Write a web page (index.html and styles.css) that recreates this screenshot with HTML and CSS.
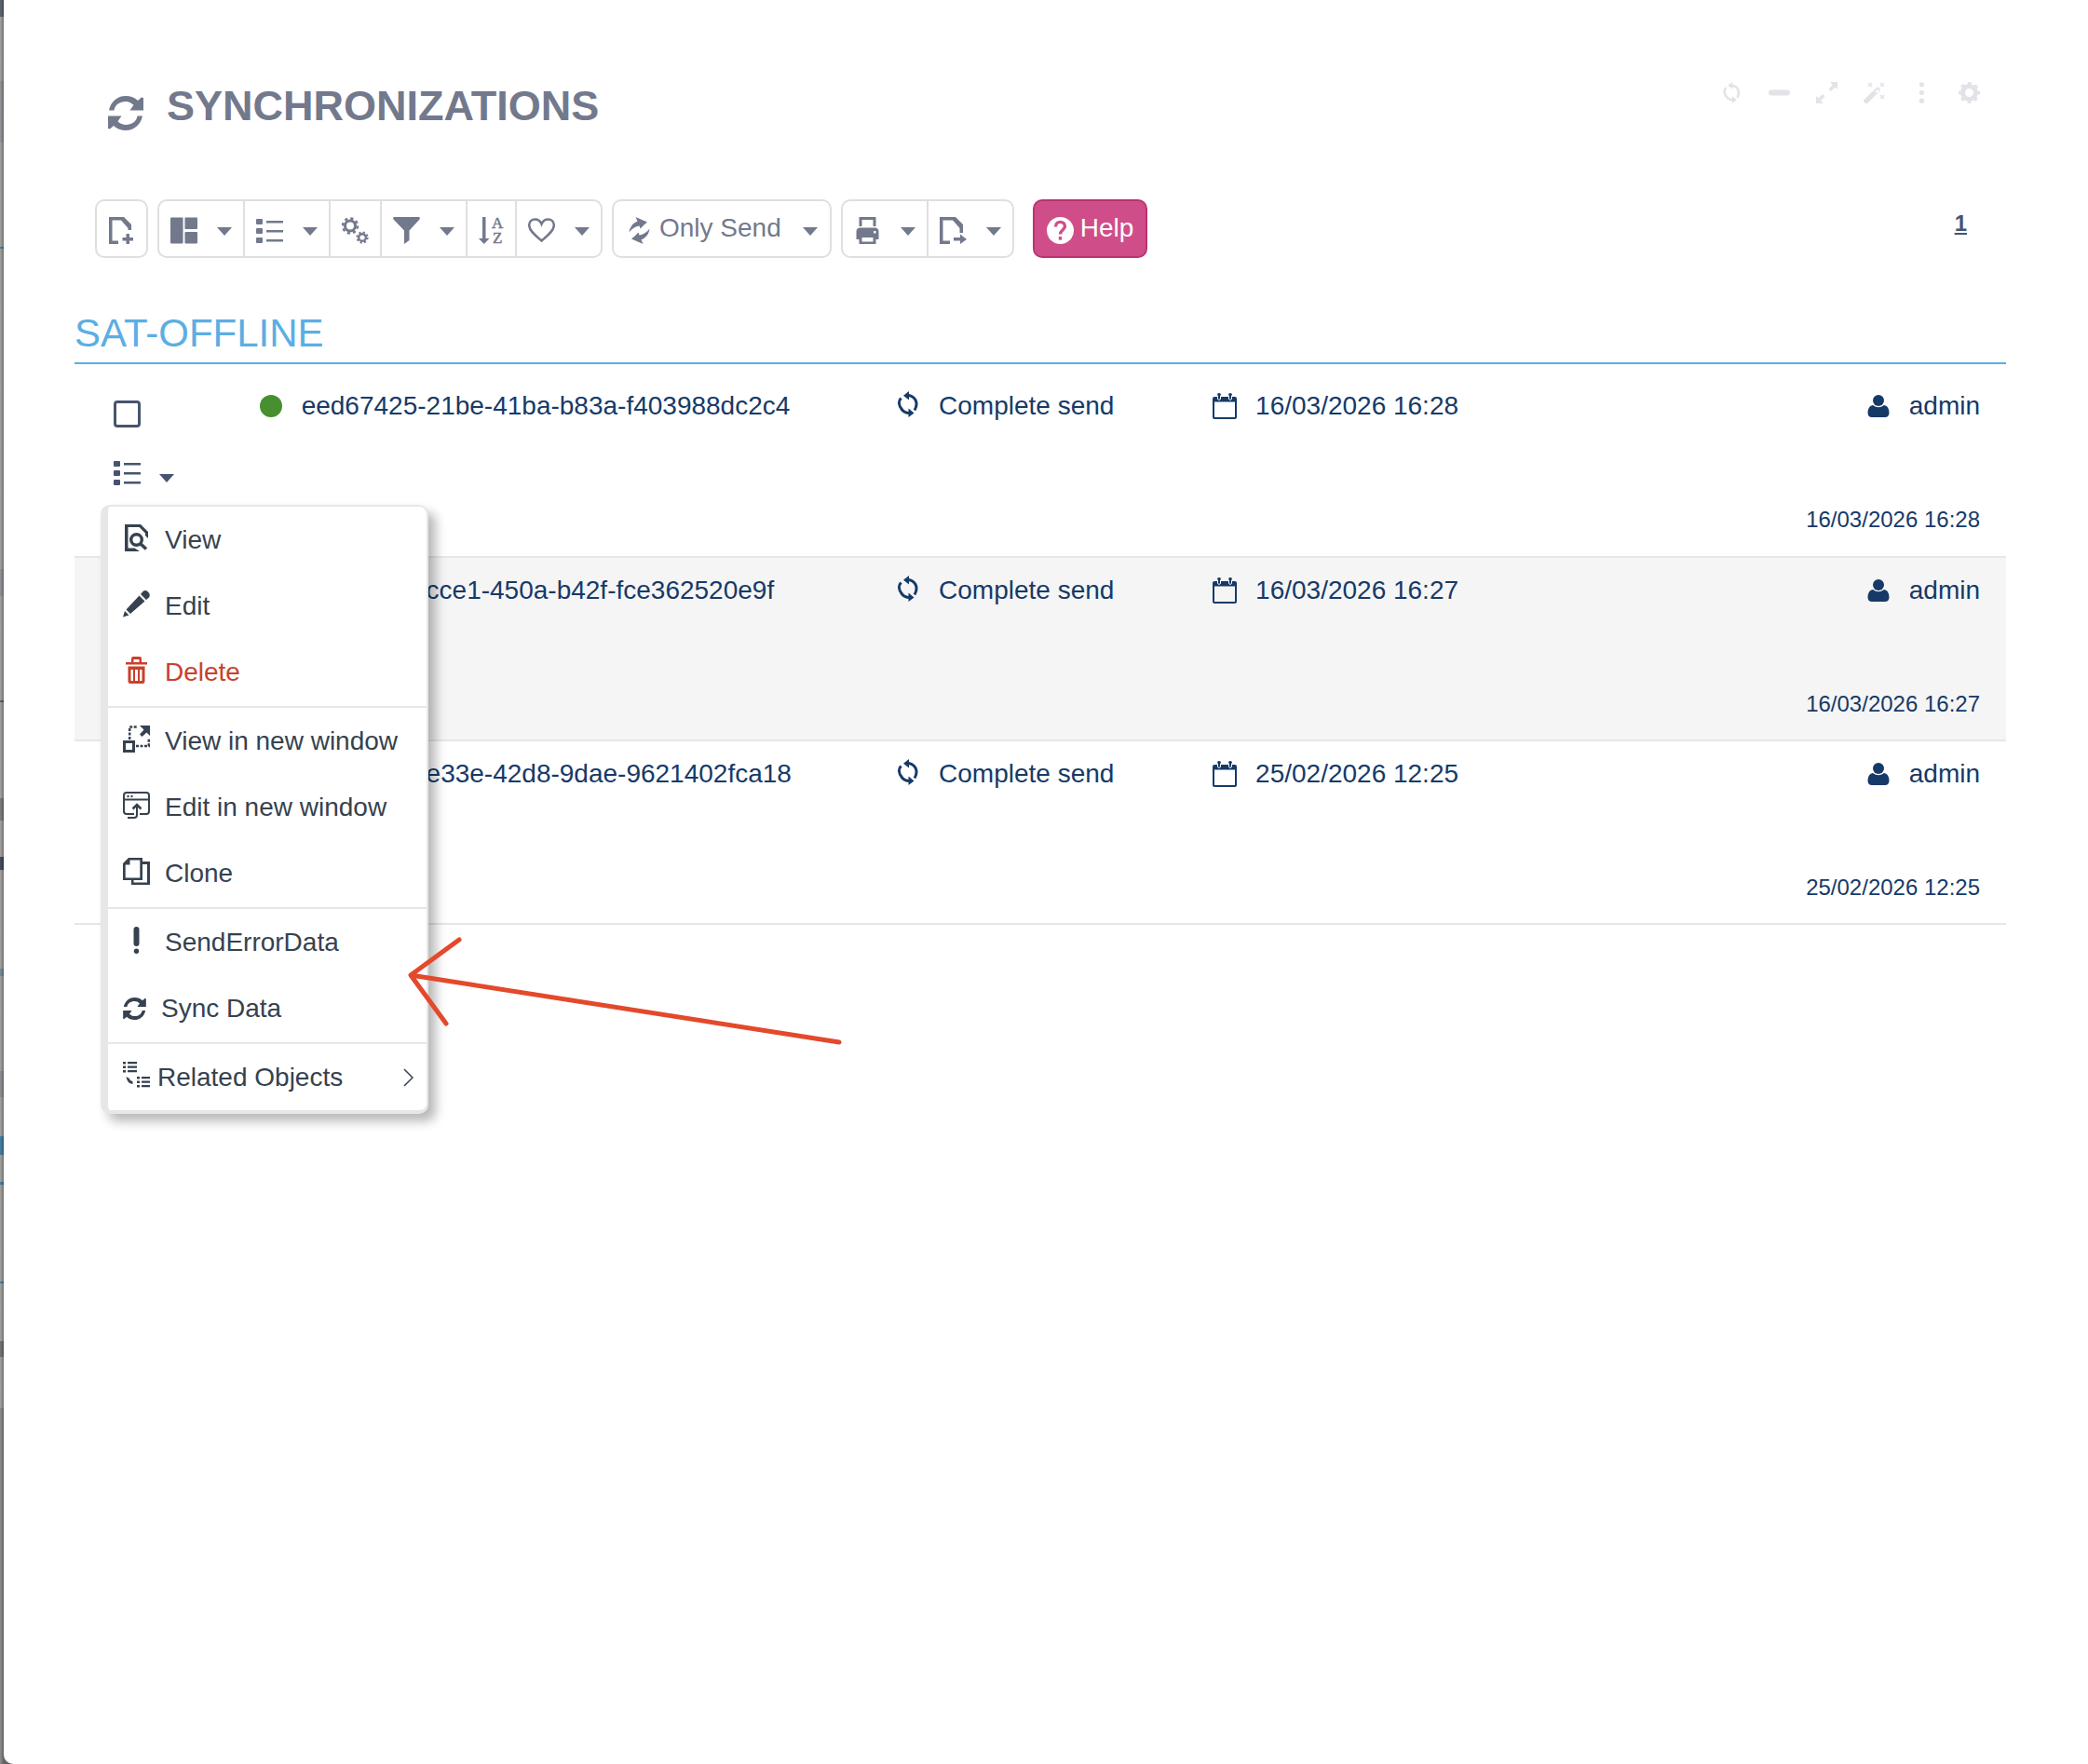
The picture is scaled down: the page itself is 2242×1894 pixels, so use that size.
FILE: index.html
```html
<!DOCTYPE html>
<html lang="en">
<head>
    <meta charset="UTF-8">
    <meta name="viewport" content="width=device-width, initial-scale=1.0">
    <title>Synchronizations</title>
    <link rel="stylesheet" href="styles.css">
</head>
<body>

    <!-- Icons -->
    <svg class="sprite" aria-hidden="true">
        <symbol id="i-refresh" viewBox="0 0 38 37">
            <path d="M1 15.500C3 6 10 0 19 0C24 0 28.500 1.800 32 5L36 1.500L38 2V15.500H23.500L27.500 9.800C25 7.300 22 6 19 6C12.500 6 7.500 9.500 6.500 15.500z"/>
            <path d="M37 21.500C35 31 28 37 19 37C14 37 9.500 35.200 6 32L2 35.500L0 35V21.500H14.500L10.500 27.200C13 29.700 16 31 19 31C25.500 31 30.500 27.500 31.500 21.500z"/>
        </symbol>
        <symbol id="i-caret" viewBox="0 0 16 9"><path d="M0 0H16L8 9z"/></symbol>
        <symbol id="i-new" viewBox="0 0 29 29">
            <path d="M11 29H1V0H17L25 8V14H21.500V12L14 3.500H4.500V25.500H11z"/>
            <path d="M19.500 18h3.500v4h4v3.500h-4v4h-3.500v-4h-4v-3.500h4z"/>
        </symbol>
        <symbol id="i-layout" viewBox="0 0 30 29">
            <rect width="14" height="29" rx="1"/><rect x="16" width="14" height="13" rx="1"/><rect x="16" y="16" width="14" height="13" rx="1"/>
        </symbol>
        <symbol id="i-list" viewBox="0 0 29 29">
            <rect y="2" width="7" height="6" rx="1"/><rect y="12" width="7" height="6" rx="1"/><rect y="22" width="7" height="6" rx="1"/>
            <path d="M11 4h18v2.500H11zM11 14h18v2.500H11zM11 24h18v2.500H11z"/>
        </symbol>
        <symbol id="i-gears" viewBox="0 0 29 29">
            <g fill="none" stroke="currentColor">
                <circle cx="9" cy="9.500" r="5.500" stroke-width="3"/>
                <circle cx="9" cy="9.500" r="8" stroke-width="2.500" stroke-dasharray="3.200 3.080"/>
                <circle cx="22" cy="22" r="3.800" stroke-width="2.400"/>
                <circle cx="22" cy="22" r="5.600" stroke-width="2" stroke-dasharray="2.200 2.200"/>
            </g>
        </symbol>
        <symbol id="i-filter" viewBox="0 0 29 29"><path d="M1 0H28Q29.500 .5 28.500 2.500L17.500 14.500V25L12 29V14.500L.5 2.500Q-.5 .5 1 0z"/></symbol>
        <symbol id="i-heart" viewBox="0 0 29 29">
            <path fill="none" stroke="currentColor" stroke-width="2.500" d="M14.500 25.500C8 20 1.200 14.500 1.200 9C1.200 5 4 2.500 7.500 2.500C10.500 2.500 13 4 14.500 7.500C16 4 18.500 2.500 21.500 2.500C25 2.500 27.800 5 27.800 9C27.800 14.500 21 20 14.500 25.500z"/>
        </symbol>
        <symbol id="i-send" viewBox="0 0 23 29">
            <path id="bolt" d="M7.500 0L20 5.500L16.500 8.500L12.500 12.500L11.500 9.500Q5 10.500 .5 16.500Q1.500 8 9.500 4.500z"/>
            <use href="#bolt" transform="rotate(180 11.500 14.500)"/>
        </symbol>
        <symbol id="i-print" viewBox="0 0 24 29">
            <path d="M3 0h18v10h-3V3H6v7H3z"/>
            <path fill-rule="evenodd" d="M3 11.500h18q3 1 3 4V24h-3v5H3v-5H0v-8.500q0-3 3-4zM6 22v4.500h12V22zM18.500 15v2.500h2.500V15z"/>
        </symbol>
        <symbol id="i-export" viewBox="0 0 29 29">
            <path d="M11 29H0V0H17L25 8V17H21.500V12L14 3.500H3.500V25.500H11z"/>
            <path d="M15 22h7v-3.500l7 5.500l-7 5v-3.500h-7z"/>
        </symbol>
        <symbol id="i-help" viewBox="0 0 29 29">
            <circle cx="14.500" cy="14.500" r="14.500"/>
            <path fill="none" stroke="#cf4e8a" stroke-width="3.400" d="M9.500 10.500C9.500 3.500 19.500 4 19.500 10C19.500 13.500 14.500 14 14.500 18.500"/>
            <rect x="12.800" y="21" width="3.400" height="3.600" fill="#cf4e8a"/>
        </symbol>
        <symbol id="i-loop" viewBox="0 0 22 28">
            <path fill="none" stroke="currentColor" stroke-width="3" d="M4.500 19.500C.5 15 .8 10.500 3.500 7.500M10 4.500C18 4.500 23 12 18 20.500M3.500 18.500C5.500 22 9 23.500 13 23.500"/>
            <path d="M12 0V9.500L6 4.700zM11.500 18.500V28L17.500 23.500z"/>
        </symbol>
        <symbol id="i-minus" viewBox="0 0 23 23"><rect y="8.500" width="23" height="6" rx="3"/></symbol>
        <symbol id="i-expand" viewBox="0 0 23 23">
            <path d="M15 0h8v8l-2.500-2.500L16 10l-2.500-2.500L18 3zM0 23v-8l2.500 2.500L7 13l2.500 2.500L5 20l3 3z"/>
        </symbol>
        <symbol id="i-wand" viewBox="0 0 23 23">
            <path fill-rule="evenodd" d="M0 19.500L14 6q1.500-1 3 .5t.5 3L4 23q-1.500 .5-3-1t-1-2.500zM12.500 10l2 2l2-2.500l-1.500-1.500z"/>
            <path fill="none" stroke="currentColor" stroke-width="1.500" d="M5 1l4 4m0-4l-4 4M18 1l4 4m0-4l-4 4M18 14l4 4m0-4l-4 4"/>
        </symbol>
        <symbol id="i-dots" viewBox="0 0 23 23"><circle cx="11.500" cy="2.800" r="2.600"/><circle cx="11.500" cy="11.500" r="2.600"/><circle cx="11.500" cy="20.200" r="2.600"/></symbol>
        <symbol id="i-gear" viewBox="0 0 23 23">
            <g fill="none" stroke="currentColor">
                <circle cx="11.500" cy="11.500" r="7" stroke-width="5"/>
                <circle cx="11.500" cy="11.500" r="10" stroke-width="3" stroke-dasharray="3.800 4.054" stroke-dashoffset="1.900"/>
            </g>
        </symbol>
        <symbol id="i-calendar" viewBox="0 0 26 28">
            <path fill-rule="evenodd" d="M2 4h3V2q0-2 2-2t2 2v2h8V2q0-2 2-2t2 2v2h3q2 0 2 2v20q0 2-2 2H2q-2 0-2-2V6q0-2 2-2zM2 9.500V26h22V9.500z"/>
            <path fill="none" stroke="#fff" d="M5.500 2.500v4q1.500 2 3 0v-4M17.500 2.500v4q1.500 2 3 0v-4"/>
        </symbol>
        <symbol id="i-user" viewBox="0 0 24 24">
            <circle cx="12" cy="6" r="6"/>
            <path d="M6 11q6 4.500 12 0q5 .5 5.500 8q0 5-4.500 5H5q-4.500 0-4.500-5q.5-7.500 5.500-8z"/>
        </symbol>
        <symbol id="i-view" viewBox="0 0 29 29">
            <path d="M2 0h17l8 8v7l-3-3V9.500L17.500 3H5.500v22.500h7L18 29H2z"/>
            <path fill="none" stroke="currentColor" stroke-width="3.500" d="M18 20l7 6.500"/>
            <circle cx="14.500" cy="16.500" r="5.800" fill="none" stroke="currentColor" stroke-width="3.400"/>
        </symbol>
        <symbol id="i-edit" viewBox="0 0 29 29">
            <path d="M0 28.500L2 22L6.500 26.500zM3.500 20.500L17.500 5.500L23.500 11.500L8 25zM19 4L21.500 1Q24-1 27 1.500Q30 4.500 28 7.500L25 10z"/>
        </symbol>
        <symbol id="i-delete" viewBox="0 0 29 29">
            <path fill-rule="evenodd" d="M9 6V2q0-2 2-2h7q2 0 2 2v4h6v2.500H3V6zM11.500 6h6V3h-6zM5.500 10.500h18V26q0 3-2.500 3H8q-2.500 0-2.500-3zM8.500 14v12h2.500V14zM13 14v12h3V14zM18 14v12h2.500V14z"/>
        </symbol>
        <symbol id="i-viewnew" viewBox="0 0 29 29">
            <path fill-rule="evenodd" d="M0 16h13v13H0zM3 19v7h7v-7z"/>
            <path d="M18 0h11v11l-3.500-3.500l-5 4.500l-2.500-2.500l4.500-5z"/>
            <path fill="none" stroke="currentColor" stroke-width="2.500" stroke-dasharray="3 1.500" d="M7.200 15V1.500H15M14 22H27.800V14"/>
        </symbol>
        <symbol id="i-editnew" viewBox="0 0 29 29">
            <g fill="none" stroke="currentColor" stroke-width="2">
                <path d="M12 24H4q-3 0-3-3V4q0-3 3-3h21q3 0 3 3v17q0 3-3 3h-7M1 8.500h27M5 28h7q3 0 3-3V15"/>
                <path d="M10.500 18.500L15 14l4.500 4.500" stroke-width="2.500"/>
            </g>
            <circle cx="5.500" cy="5" r="1.200"/><circle cx="9.500" cy="5" r="1.200"/>
        </symbol>
        <symbol id="i-clone" viewBox="0 0 29 29">
            <path fill-rule="evenodd" d="M6 0h15v24H0V6zM7.500 2.500v5H2.700v14h15.600v-19z"/>
            <path d="M21 4h8v25H9v-5h2.500v2.500h14.500V7H21z"/>
        </symbol>
        <symbol id="i-bang" viewBox="0 0 29 29"><rect x="11.500" width="6" height="21" rx="3"/><circle cx="14.500" cy="26.300" r="2.700"/></symbol>
        <symbol id="i-related" viewBox="0 0 29 29">
            <path d="M0 0h3v2.500H0zM5 0h10v2.200H5zM0 4.500h3V7H0zM5 4.500h10v2.200H5zM0 9h3v2.500H0zM5 9h10v2.200H5z"/>
            <path d="M15 16h3v2.500h-3zM20 16h9v2.200h-9zM15 20.500h3V23h-3zM20 20.500h9v2.200h-9zM15 25h3v2.500h-3zM20 25h9v2.200h-9z"/>
            <path d="M3.500 16L7 18q0 2 3.500 3V24Q4.500 23.500 3.500 16z"/>
        </symbol>
        <symbol id="i-chevron" viewBox="0 0 11 20"><path fill="none" stroke="currentColor" stroke-width="1.500" d="M1 1l9 9l-9 9"/></symbol>
    </svg>

    <main class="panel">
        <header class="panel-header">
            <svg class="title-icon"><use href="#i-refresh"/></svg>
            <h1>SYNCHRONIZATIONS</h1>
            <div class="window-tools">
                <button aria-label="Reload"><svg><use href="#i-loop"/></svg></button>
                <button aria-label="Minimize"><svg><use href="#i-minus"/></svg></button>
                <button aria-label="Expand"><svg><use href="#i-expand"/></svg></button>
                <button aria-label="Wizard"><svg><use href="#i-wand"/></svg></button>
                <button aria-label="More"><svg><use href="#i-dots"/></svg></button>
                <button aria-label="Settings"><svg><use href="#i-gear"/></svg></button>
            </div>
        </header>

        <div class="toolbar">
            <div class="btn-group">
                <button class="btn" aria-label="New"><svg class="icon"><use href="#i-new"/></svg></button>
            </div>
            <div class="btn-group">
                <button class="btn" aria-label="Layout"><svg class="icon"><use href="#i-layout"/></svg><svg class="caret"><use href="#i-caret"/></svg></button>
                <button class="btn" aria-label="Actions"><svg class="icon"><use href="#i-list"/></svg><svg class="caret"><use href="#i-caret"/></svg></button>
                <button class="btn" aria-label="Processes"><svg class="icon"><use href="#i-gears"/></svg></button>
                <button class="btn" aria-label="Filter"><svg class="icon"><use href="#i-filter"/></svg><svg class="caret"><use href="#i-caret"/></svg></button>
                <button class="btn" aria-label="Sort"><svg class="icon icon-narrow" viewBox="0 0 27 29"><path d="M4 0h3.500v23h4L5.800 29L0 23h4z"/><text x="14" y="12" class="sort-letter">A</text><text x="15" y="28" class="sort-letter">Z</text></svg></button>
                <button class="btn" aria-label="Favourites"><svg class="icon"><use href="#i-heart"/></svg><svg class="caret"><use href="#i-caret"/></svg></button>
            </div>
            <div class="btn-group">
                <button class="btn btn-send"><svg class="icon icon-send"><use href="#i-send"/></svg><span>Only Send</span><svg class="caret"><use href="#i-caret"/></svg></button>
            </div>
            <div class="btn-group">
                <button class="btn" aria-label="Print"><svg class="icon"><use href="#i-print"/></svg><svg class="caret"><use href="#i-caret"/></svg></button>
                <button class="btn" aria-label="Export"><svg class="icon"><use href="#i-export"/></svg><svg class="caret"><use href="#i-caret"/></svg></button>
            </div>
            <button class="btn btn-help"><svg class="icon"><use href="#i-help"/></svg><span>Help</span></button>
            <a class="page-link" href="#">1</a>
        </div>

        <section class="group">
            <h2>SAT-OFFLINE</h2>
            <table class="rows">
                <colgroup><col class="col-check"><col class="col-id"><col class="col-type"><col class="col-date"><col></colgroup>
                <tr>
                    <td>
                        <input type="checkbox" class="check" aria-label="Select row">
                        <div class="row-actions">
                            <button class="row-btn" aria-label="Row actions"><svg class="icon"><use href="#i-list"/></svg><svg class="caret"><use href="#i-caret"/></svg></button>
                            <!-- Row menu -->
                            <div class="menu">
                                <a href="#"><svg class="icon"><use href="#i-view"/></svg>View</a>
                                <a href="#"><svg class="icon"><use href="#i-edit"/></svg>Edit</a>
                                <a href="#" class="danger"><svg class="icon"><use href="#i-delete"/></svg>Delete</a>
                                <hr>
                                <a href="#"><svg class="icon"><use href="#i-viewnew"/></svg>View in new window</a>
                                <a href="#"><svg class="icon"><use href="#i-editnew"/></svg>Edit in new window</a>
                                <a href="#"><svg class="icon"><use href="#i-clone"/></svg>Clone</a>
                                <hr>
                                <a href="#"><svg class="icon"><use href="#i-bang"/></svg>SendErrorData</a>
                                <a href="#"><svg class="icon icon-small"><use href="#i-refresh"/></svg>Sync Data</a>
                                <hr>
                                <a href="#" class="submenu"><svg class="icon"><use href="#i-related"/></svg>Related Objects<svg class="chevron"><use href="#i-chevron"/></svg></a>
                            </div>
                        </div>
                    </td>
                    <td><div class="field"><span class="slot"><i class="dot"></i></span>eed67425-21be-41ba-b83a-f403988dc2c4</div></td>
                    <td><div class="field"><span class="slot"><svg class="loop"><use href="#i-loop"/></svg></span>Complete send</div></td>
                    <td><div class="field"><span class="slot"><svg class="calendar"><use href="#i-calendar"/></svg></span>16/03/2026 16:28</div></td>
                    <td class="last"><div class="field"><span class="slot"><svg class="user"><use href="#i-user"/></svg></span>admin</div><div class="stamp">16/03/2026 16:28</div></td>
                </tr>
                <tr>
                    <td><input type="checkbox" class="check" aria-label="Select row"></td>
                    <td><div class="field"><span class="slot"><i class="dot"></i></span>3d9b7a52-cce1-450a-b42f-fce362520e9f</div></td>
                    <td><div class="field"><span class="slot"><svg class="loop"><use href="#i-loop"/></svg></span>Complete send</div></td>
                    <td><div class="field"><span class="slot"><svg class="calendar"><use href="#i-calendar"/></svg></span>16/03/2026 16:27</div></td>
                    <td class="last"><div class="field"><span class="slot"><svg class="user"><use href="#i-user"/></svg></span>admin</div><div class="stamp">16/03/2026 16:27</div></td>
                </tr>
                <tr>
                    <td><input type="checkbox" class="check" aria-label="Select row"></td>
                    <td><div class="field"><span class="slot"><i class="dot"></i></span>7b04a9d1-e33e-42d8-9dae-9621402fca18</div></td>
                    <td><div class="field"><span class="slot"><svg class="loop"><use href="#i-loop"/></svg></span>Complete send</div></td>
                    <td><div class="field"><span class="slot"><svg class="calendar"><use href="#i-calendar"/></svg></span>25/02/2026 12:25</div></td>
                    <td class="last"><div class="field"><span class="slot"><svg class="user"><use href="#i-user"/></svg></span>admin</div><div class="stamp">25/02/2026 12:25</div></td>
                </tr>
            </table>
        </section>

        <svg class="arrow" viewBox="0 0 468 118" aria-hidden="true"><path d="M464 114L4 42L56 4M4 42L42 94"/></svg>
    </main>

</body>
</html>
```
FILE: styles.css
```css
* {
    box-sizing: border-box;
}
html {
    background: #939391;
}
body {
    margin: 0;
    font-family: "Liberation Sans", Arial, sans-serif;
    font-size: 28px;
    line-height: 34px;
    color: #163a68;
    /* page behind the panel, only its edge shows */
    background:
        linear-gradient(to right, rgba(0,0,0,0) 0, rgba(0,0,0,0.3) 4px),
        linear-gradient(#5f6872 0 18px, #a5a4a1 18px 87px, #96979b 87px 153px, #a5a4a1 153px 265px, #4583a8 265px 267px,
            #a5a4a1 267px 611px, #94959a 611px 640px, #a5a4a1 640px 752px, #5b6470 752px 754px, #a5a4a1 754px 857px,
            #808080 857px 881px, #a5a4a1 881px 920px, #454f60 920px 934px, #a5a4a1 934px 1040px, #7b8f99 1040px 1048px,
            #a5a4a1 1048px 1150px, #909196 1150px 1178px, #a5a4a1 1178px 1220px, #4583a8 1220px 1240px, #a5a4a1 1240px 1269px,
            #4583a8 1269px 1272px, #a5a4a1 1272px 1376px, #4583a8 1376px 1378px, #a5a4a1 1378px 1440px, #777675 1440px 1457px,
            #a5a4a1 1457px 1512px, #8e8e8e 1512px);
}
button {
    font: inherit;
    color: inherit;
    background: none;
    border: none;
    padding: 0;
    cursor: pointer;
}
svg {
    display: block;
    fill: currentColor;
    flex: none;
}
.sprite { position: absolute; width: 0; height: 0; }
.sort-letter { font: 17px "Liberation Serif", serif; stroke: currentColor; stroke-width: 0.5; }

.panel {
    position: relative;
    min-height: 100vh;
    margin-left: 4px;
    padding: 88px 88px 0 76px;
    background: #fff;
    border-bottom-left-radius: 10px;
}
.panel-header {
    display: flex;
    align-items: flex-start;
    padding: 0 28px 0 36px;
    color: #73798d;
}
.title-icon { width: 38px; height: 37px; margin-top: 15px; }
h1 {
    margin: 0 0 0 25px;
    font-size: 45px;
    line-height: 52px;
}
.window-tools {
    display: flex;
    gap: 28px;
    margin-left: auto;
    color: #e1e3e8;
}
.window-tools svg { width: 23px; height: 23px; }

.toolbar {
    display: flex;
    align-items: center;
    gap: 10px;
    margin-top: 74px;
    padding: 0 42px 0 22px;
    color: #73798d;
}
.btn-group { display: flex; }
.btn {
    display: flex;
    align-items: center;
    gap: 21px;
    height: 63px;
    padding: 3px 12px 0;
    border: 2px solid #dfdfdf;
}
.btn + .btn { margin-left: -2px; }
.btn:first-child { border-radius: 10px 0 0 10px; }
.btn:last-child { border-radius: 0 10px 10px 0; }
.btn:only-child, .btn-help { border-radius: 10px; }
.icon { width: 29px; height: 29px; }
.icon-narrow { width: 27px; }
.icon-send { width: 23px; }
.caret { width: 16px; height: 9px; margin-top: 3px; }
.btn-send { gap: 23px; padding: 3px 13px 0 16px; }
.btn-send span, .btn-help span { padding-bottom: 4px; }
.btn-send span { margin-left: -13px; }
.btn-help {
    gap: 7px;
    margin-left: 5px;
    padding: 3px 13px 0;
    color: #fff;
    background: #cf4e8a;
    border-color: #bb3273;
}
.toolbar .btn-help { margin-left: 10px; border-radius: 10px; }
.page-link {
    margin-left: auto;
    padding-bottom: 12px;
    font-size: 24px;
    font-weight: bold;
    color: #47546f;
}

.group { margin-top: 56px; }
h2 {
    margin: 0;
    padding-bottom: 6px;
    font-size: 42px;
    font-weight: normal;
    line-height: 50px;
    color: #5baee3;
    border-bottom: 2px solid #5baee3;
}
.rows {
    width: 100%;
    table-layout: fixed;
    border-spacing: 0;
}
.col-check { width: 9%; }
.col-id { width: 33%; }
.col-type { width: 340px; }
.col-date { width: 340px; }
td {
    height: 197px;
    padding: 18px 8px 0;
    vertical-align: top;
    border-bottom: 2px solid #e7e7e7;
}
tr:first-child td { height: 208px; padding-top: 28px; }
tr:nth-child(even) { background: #f5f5f5; }
td:first-child { padding-left: 42px; }
.check {
    display: block;
    appearance: none;
    width: 29px;
    height: 29px;
    margin: 11px 0 0;
    border: 3px solid #47546f;
    border-radius: 4px;
}
.row-actions {
    position: relative;
    margin-top: 34px;
}
.row-btn {
    display: flex;
    align-items: center;
    gap: 20px;
    color: #47546f;
}
.row-btn .caret { margin-top: 11px; }

.menu {
    position: absolute;
    z-index: 1;
    top: 49px;
    left: -14px;
    width: 352px;
    color: #36424f;
    background: #fff;
    border: 2px solid #e7e7e7;
    border-width: 2px 2px 4px 8px;
    border-radius: 10px;
    box-shadow: 8px 8px 12px rgba(0,0,0,0.28);
}
.menu a {
    display: flex;
    align-items: center;
    gap: 16px;
    height: 71px;
    padding: 0 14px 0 16px;
    color: inherit;
    text-decoration: none;
    white-space: nowrap;
}
.menu .icon { margin-bottom: 4px; }
.menu .icon-small { width: 25px; height: 24px; margin-bottom: 0; }
.menu .danger { color: #c8412b; }
.menu .submenu { gap: 8px; }
.menu hr {
    margin: 1px 0 0;
    border: none;
    border-top: 2px solid #e7e7e7;
}
.chevron { width: 11px; height: 20px; margin-left: auto; }

.field {
    display: flex;
    align-items: center;
    white-space: nowrap;
}
.slot {
    display: flex;
    justify-content: center;
    width: 32px;
    margin-right: 17px;
}
.dot {
    width: 24px;
    height: 24px;
    border-radius: 50%;
    background: #478f2f;
}
.loop { width: 22px; height: 28px; margin-bottom: 4px; }
.calendar { width: 26px; height: 28px; }
.user { width: 24px; height: 24px; }
.last { padding-right: 28px; }
.last .field { justify-content: flex-end; }
.stamp {
    margin-top: 88px;
    font-size: 24px;
    text-align: right;
}

/* Arrow pointing at the menu */
.arrow {
    position: absolute;
    z-index: 2;
    top: 1005px;
    left: 433px;
    width: 468px;
    height: 118px;
    fill: none;
    stroke: #e4492b;
    stroke-width: 5;
    stroke-linecap: round;
    stroke-linejoin: round;
}
```
